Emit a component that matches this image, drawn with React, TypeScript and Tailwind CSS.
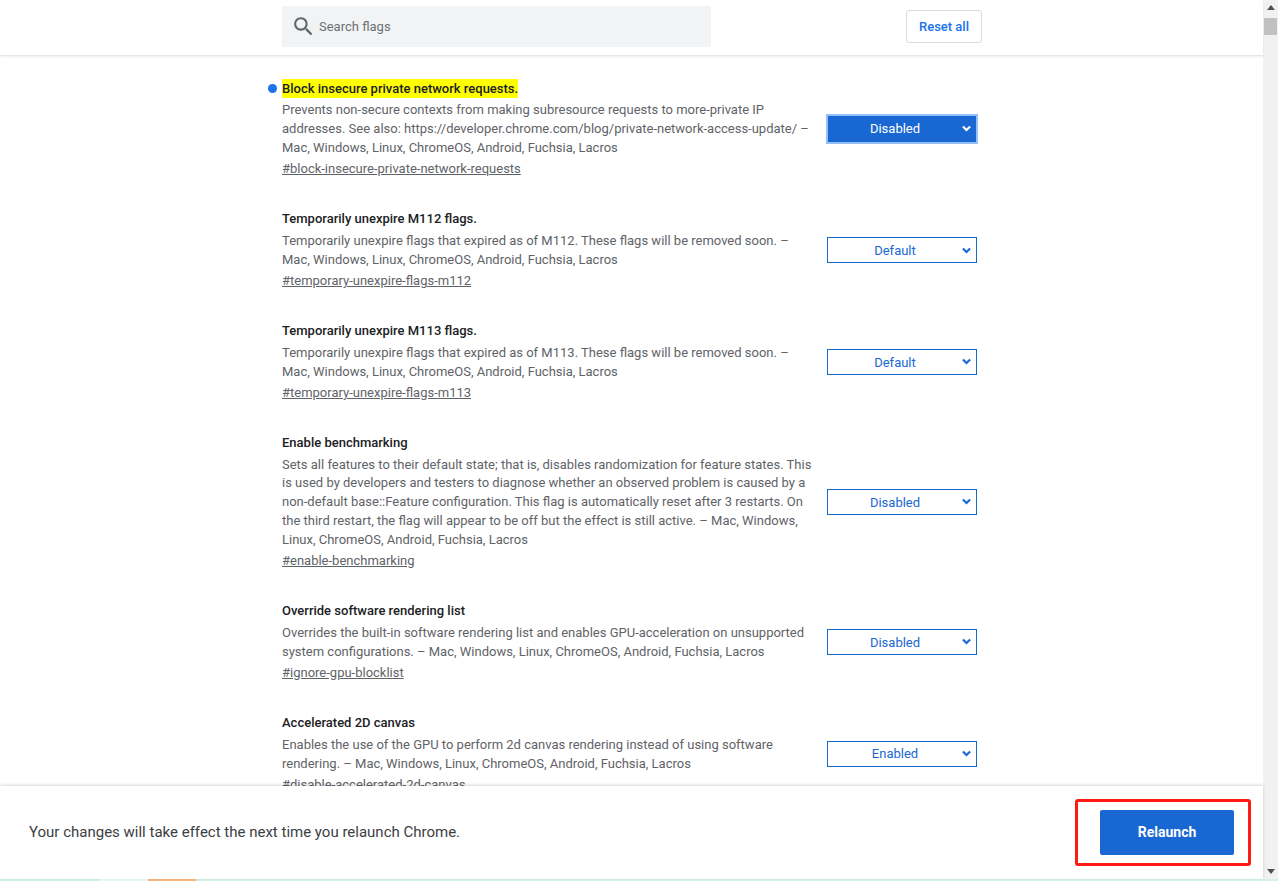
const flags = [
  {
    title: "Block insecure private network requests.",
    lines: [
      "Prevents non-secure contexts from making subresource requests to more-private IP",
      "addresses. See also: https://developer.chrome.com/blog/private-network-access-update/ –",
      "Mac, Windows, Linux, ChromeOS, Android, Fuchsia, Lacros",
    ],
    link: "#block-insecure-private-network-requests",
    value: "Disabled",
    active: true,
  },
  {
    title: "Temporarily unexpire M112 flags.",
    lines: [
      "Temporarily unexpire flags that expired as of M112. These flags will be removed soon. –",
      "Mac, Windows, Linux, ChromeOS, Android, Fuchsia, Lacros",
    ],
    link: "#temporary-unexpire-flags-m112",
    value: "Default",
  },
  {
    title: "Temporarily unexpire M113 flags.",
    lines: [
      "Temporarily unexpire flags that expired as of M113. These flags will be removed soon. –",
      "Mac, Windows, Linux, ChromeOS, Android, Fuchsia, Lacros",
    ],
    link: "#temporary-unexpire-flags-m113",
    value: "Default",
  },
  {
    title: "Enable benchmarking",
    lines: [
      "Sets all features to their default state; that is, disables randomization for feature states. This",
      "is used by developers and testers to diagnose whether an observed problem is caused by a",
      "non-default base::Feature configuration. This flag is automatically reset after 3 restarts. On",
      "the third restart, the flag will appear to be off but the effect is still active. – Mac, Windows,",
      "Linux, ChromeOS, Android, Fuchsia, Lacros",
    ],
    link: "#enable-benchmarking",
    value: "Disabled",
  },
  {
    title: "Override software rendering list",
    lines: [
      "Overrides the built-in software rendering list and enables GPU-acceleration on unsupported",
      "system configurations. – Mac, Windows, Linux, ChromeOS, Android, Fuchsia, Lacros",
    ],
    link: "#ignore-gpu-blocklist",
    value: "Disabled",
  },
  {
    title: "Accelerated 2D canvas",
    lines: [
      "Enables the use of the GPU to perform 2d canvas rendering instead of using software",
      "rendering. – Mac, Windows, Linux, ChromeOS, Android, Fuchsia, Lacros",
    ],
    link: "#disable-accelerated-2d-canvas",
    value: "Enabled",
  },
];

function Chevron({ className }: { className: string }) {
  return (
    <svg viewBox="0 0 10 7" className={className} fill="none" stroke="currentColor" strokeWidth="2.4">
      <path d="M1 1.2 5 5.2 9 1.2" />
    </svg>
  );
}

function FlagRow({ flag }: { flag: (typeof flags)[number] }) {
  return (
    <div className="flex items-center mb-[31.1px]">
      <div className="w-[545px] shrink-0 relative">
        {flag.active ? (
          <span className="absolute left-[-14px] top-[5px] w-[9px] h-[9px] rounded-full bg-[#1a73e8]" />
        ) : null}
        <div className="text-[13px] leading-[19px] font-medium text-[#202124] mb-[3.8px]">
          <span className={flag.active ? "inline-block bg-[#ffff00]" : "inline-block"}>{flag.title}</span>
        </div>
        {flag.lines.map((l) => (
          <div key={l} className="text-[13px] leading-[18.85px] text-[#5f6368] whitespace-nowrap">
            {l}
          </div>
        ))}
        <div className="text-[13px] leading-[19px] mt-[1.2px] text-[#5f6368] underline whitespace-nowrap">{flag.link}</div>
      </div>
      {flag.active ? (
        <div className="w-[152px] h-[30px] mt-[1px] border-2 border-[#93c0f8] -ml-px bg-[#1967d2] flex items-center text-white text-[13px]">
          <span className="flex-1 text-center">{flag.value}</span>
          <Chevron className="w-[9px] h-[7px] mr-[5px]" />
        </div>
      ) : (
        <div className="w-[150px] h-[26px] mt-[1px] border border-[#1967d2] bg-white flex items-center text-[#1967d2] text-[13px]">
          <span className="flex-1 text-center pt-[1px]">{flag.value}</span>
          <Chevron className="w-[9px] h-[7px] mr-[5px]" />
        </div>
      )}
    </div>
  );
}

export default function App() {
  return (
    <div className="relative flex flex-col h-[881px] w-[1278px] overflow-hidden bg-white font-['Roboto',sans-serif]">
      <div className="flex flex-1 min-h-0">
        <div className="flex flex-col w-[1263px]">
          <header className="h-[56px] shrink-0 flex items-center pl-[282px] border-b border-[#e6e6e6] shadow-[0_1px_2px_rgba(0,0,0,0.07)] z-10 bg-white">
            <div className="w-[429px] h-[41px] mt-[-2px] rounded-[2px] bg-[#f1f3f4] flex items-center pl-[9px]">
              <svg viewBox="0 0 24 24" className="w-[25px] h-[25px] text-[#5f6368]" fill="currentColor">
                <path d="M15.5 14h-.79l-.28-.27A6.47 6.47 0 0 0 16 9.5 6.5 6.5 0 1 0 9.5 16c1.61 0 3.09-.59 4.23-1.57l.27.28v.79l5 4.99L20.49 19l-4.99-5zm-6 0C7.01 14 5 11.99 5 9.5S7.01 5 9.5 5 14 7.01 14 9.5 11.99 14 9.5 14z" />
              </svg>
              <span className="ml-[3px] text-[13px] text-[#6d7175]">Search flags</span>
            </div>
            <button className="ml-[195px] mt-[-2px] w-[76px] h-[33px] rounded-[3px] border border-[#dadce0] bg-white text-[13px] font-medium text-[#1a73e8]">
              Reset all
            </button>
          </header>
          <main className="flex-1 min-h-0 overflow-hidden pl-[282px] pt-[22.7px]">
            {flags.map((f) => (
              <FlagRow key={f.link} flag={f} />
            ))}
          </main>
          <footer className="h-[93px] shrink-0 shadow-[0_-1px_3px_rgba(0,0,0,0.16)] z-10 bg-white flex items-center justify-between pl-[29px] pr-[29px]">
            <span className="text-[15px] text-[#3c4043]">Your changes will take effect the next time you relaunch Chrome.</span>
            <button className="w-[134px] h-[45px] rounded-[2px] bg-[#1967d2] text-white text-[14px] font-bold">Relaunch</button>
          </footer>
        </div>
        <aside className="w-[15px] shrink-0 bg-[#f1f1f1] flex flex-col items-center">
          <svg viewBox="0 0 10 6" className="w-[8px] h-[5px] mt-[5px] text-[#505050]" fill="currentColor">
            <path d="M5 0 10 6H0z" />
          </svg>
          <div className="w-[13px] h-[17px] mt-[8px] bg-[#c1c1c1]" />
          <svg viewBox="0 0 10 6" className="w-[8px] h-[5px] mt-auto mb-[5px] text-[#505050]" fill="currentColor">
            <path d="M0 0H10L5 6z" />
          </svg>
        </aside>
      </div>
      <div className="flex h-[2px] shrink-0 bg-[#d3f1ee]">
        <div className="w-[99px] bg-[#d0f0ea]" />
        <div className="w-[49px] bg-[#eaf8f7]" />
        <div className="w-[48px] bg-[#fdb577]" />
      </div>
      <div className="absolute z-20 left-[1075px] top-[799px] w-[176px] h-[67px] border-[3px] border-[#ff1a12] rounded-[3px]" />
    </div>
  );
}
